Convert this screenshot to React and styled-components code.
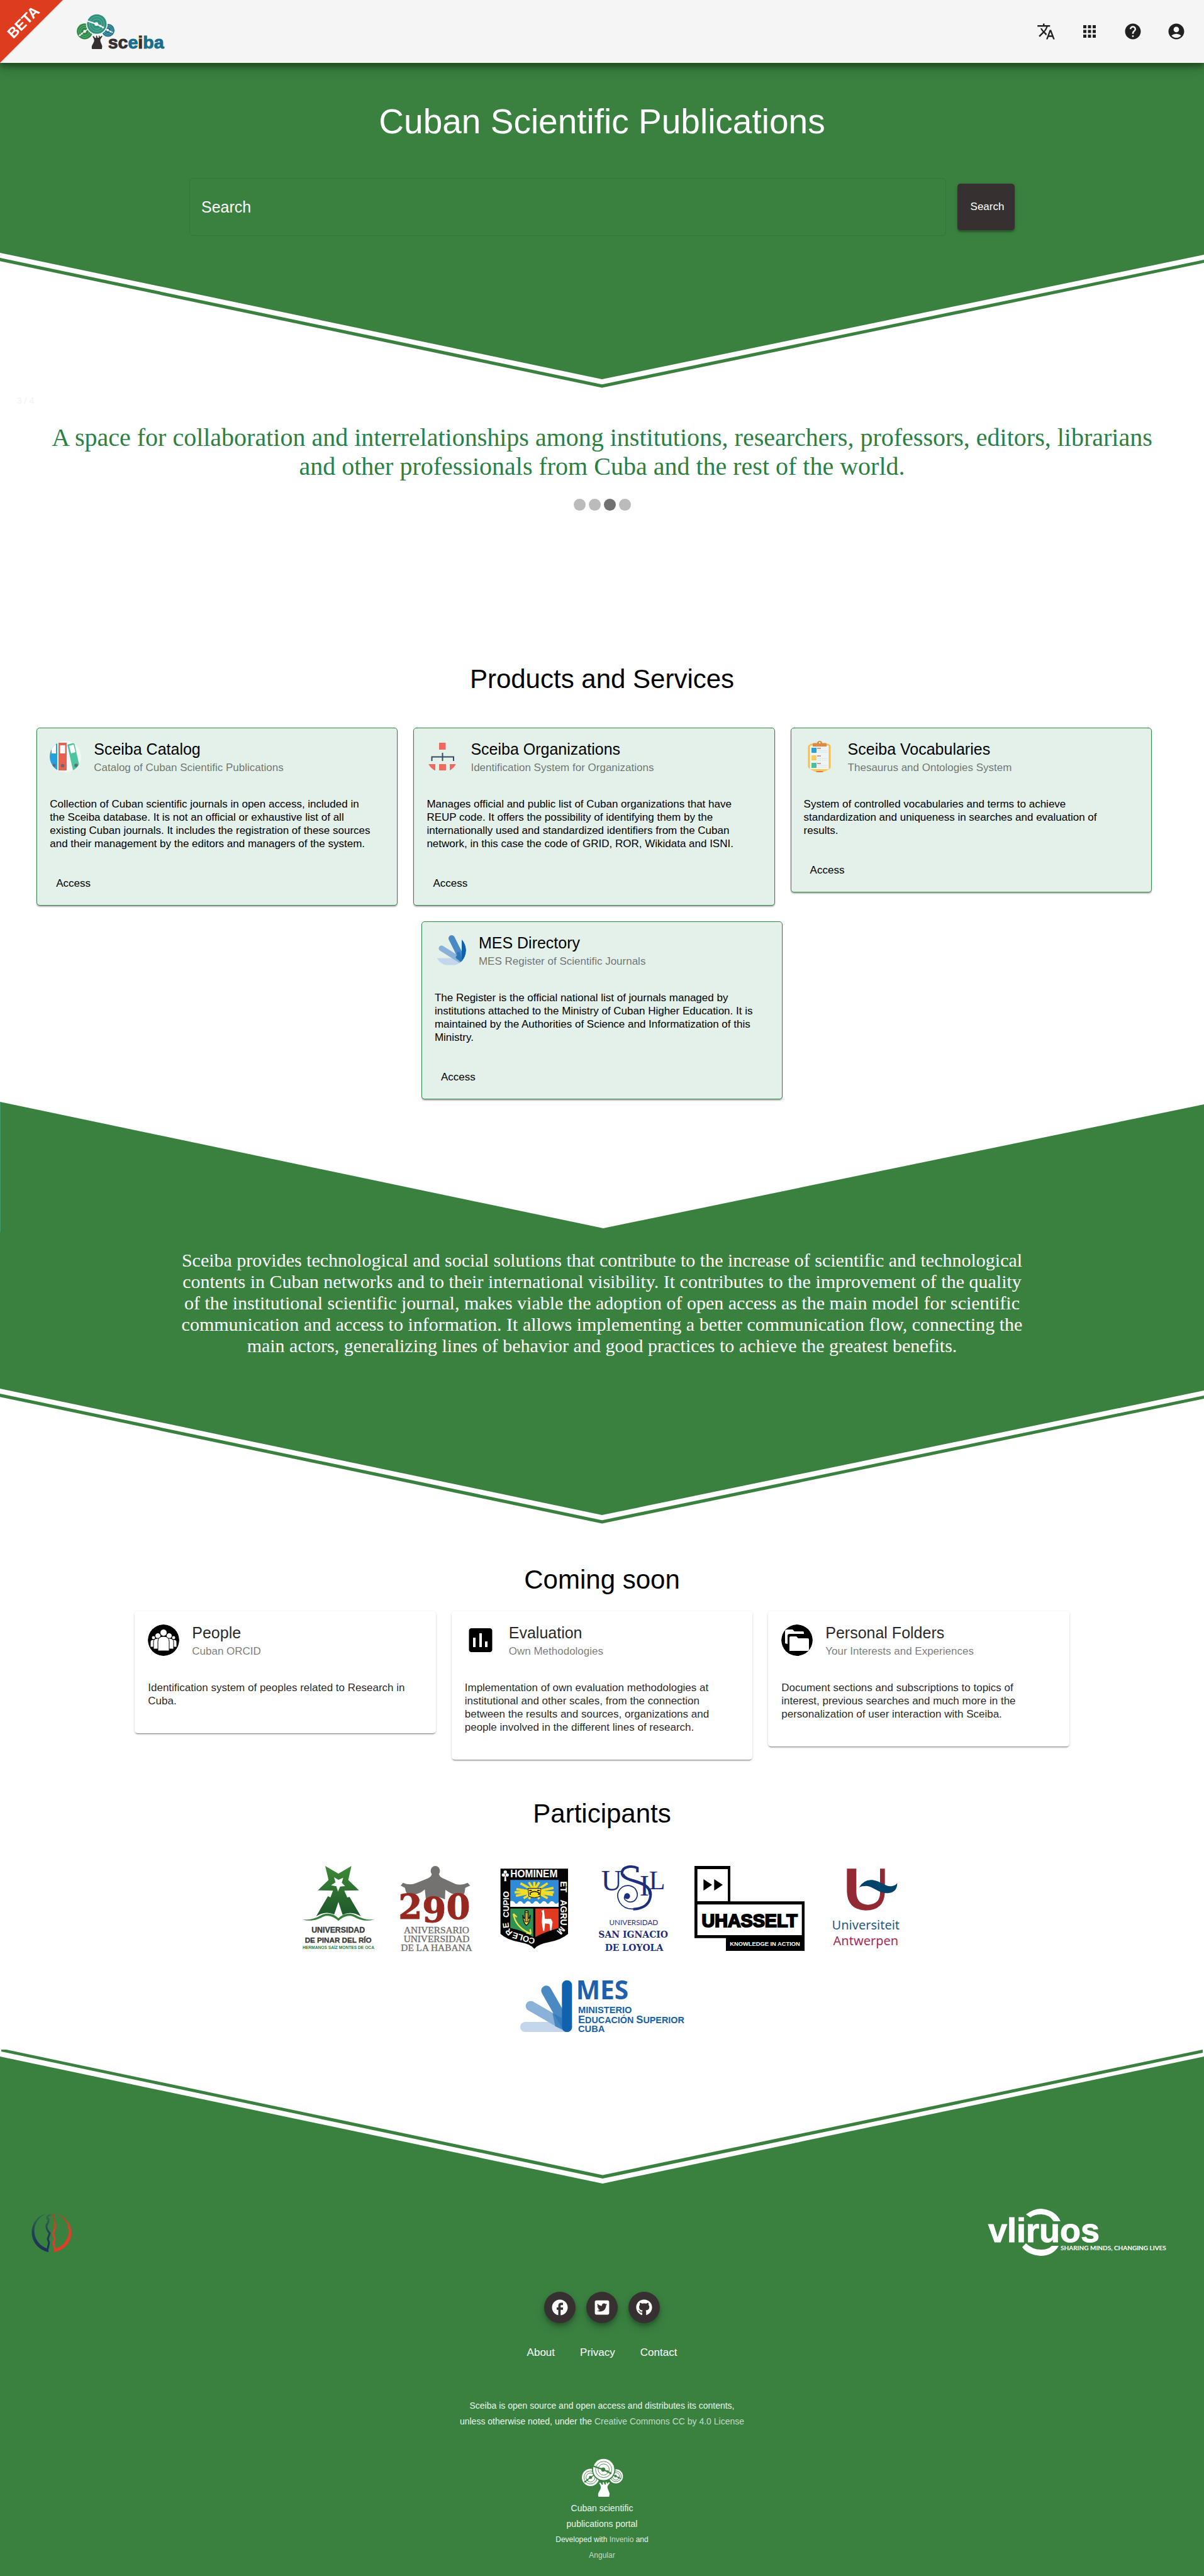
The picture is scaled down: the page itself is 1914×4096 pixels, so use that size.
import React from "react";
import styled, { createGlobalStyle, css } from "styled-components";
import { MdTranslate, MdApps, MdHelp, MdAccountCircle, MdFacebook } from "react-icons/md";
import { FaTwitterSquare, FaGithub } from "react-icons/fa";

const GREEN = "#3a8140";
const DARK = "#373031";
const SANS = `"Liberation Sans", Arial, sans-serif`;
const SERIF = `"Liberation Serif", "Times New Roman", serif`;

const GlobalStyle = createGlobalStyle`
  * { box-sizing: border-box; }
  body { margin: 0; background: #fff; color: #000; font-family: ${SANS}; }
  h1, h2, h3, p { margin: 0; font-weight: 400; }
  a { text-decoration: none; color: inherit; }
  svg { display: block; overflow: visible; }
`;

/* ---------- header ---------- */

const Header = styled.header`
  position: relative;
  z-index: 2;
  display: flex;
  align-items: center;
  justify-content: space-between;
  height: 100px;
  padding: 0 19px 0 121px;
  background: #f5f5f5;
  box-shadow: 0 6px 8px rgba(0, 0, 0, 0.32), 0 10px 20px rgba(0, 0, 0, 0.16);
`;

const Ribbon = styled.div`
  position: absolute;
  top: 0;
  left: 0;
  display: grid;
  place-items: center;
  width: 100px;
  height: 100px;
  padding: 0 26px 30px 0;
  background: #dd3c1f;
  clip-path: polygon(0 0, 100% 0, 0 100%);

  span {
    color: #fff;
    font-size: 23px;
    font-weight: 700;
    transform: rotate(-45deg);
  }
`;

const Nav = styled.nav`
  display: flex;
  gap: 19px;
`;

const IconButton = styled.button`
  display: grid;
  place-items: center;
  width: 50px;
  height: 50px;
  padding: 0;
  border: 0;
  background: none;
  color: #212121;
  font-size: 30px;
`;

/* ---------- hero ---------- */

const Hero = styled.section`
  padding: 61px 24px 26px;
  background: ${GREEN};
  color: #fff;
`;

const HeroTitle = styled.h1`
  font-size: 55px;
  line-height: 64px;
  text-align: center;
`;

const SearchForm = styled.form`
  display: flex;
  align-items: center;
  gap: 18px;
  max-width: 1312px;
  margin: 58px auto 0;
`;

const SearchInput = styled.input`
  flex: 1;
  min-width: 0;
  height: 92px;
  padding: 0 18px;
  border: 1px solid #35753a;
  border-radius: 6px;
  background: transparent;
  color: #fff;
  font: 25px ${SANS};
  outline: 0;

  &::placeholder { color: #fff; opacity: 1; }
`;

const SearchButton = styled.button`
  width: 91px;
  height: 74px;
  padding: 0 0 0 4px;
  border: 0;
  border-radius: 5px;
  background: ${DARK};
  color: #fff;
  font: 17px ${SANS};
  box-shadow: 0 3px 2px rgba(0, 0, 0, 0.2), 0 2px 6px rgba(0, 0, 0, 0.2);
`;

/* ---------- carousel ---------- */

const Carousel = styled.section`
  position: relative;
  padding: 56px 80px 244px;
  text-align: center;
`;

const SlideNumber = styled.span`
  position: absolute;
  top: 10px;
  left: 27px;
  color: #f2f2f2;
  font-size: 14px;
  line-height: 20px;
`;

const SlideText = styled.p`
  color: #2b8144;
  font-family: ${SERIF};
  font-size: 40px;
  line-height: 46px;
`;

const Dots = styled.div`
  display: flex;
  justify-content: center;
  gap: 5px;
  margin-top: 28px;
`;

const Dot = styled.button`
  width: 19px;
  height: 19px;
  padding: 0;
  border: 0;
  border-radius: 50%;
  background: ${(p) => (p.$active ? "#717171" : "#bbb")};
`;

/* ---------- cards ---------- */

const SectionTitle = styled.h2`
  font-size: 42px;
  line-height: 48px;
  text-align: center;
`;

const Products = styled.section`
  padding-bottom: 4px;
`;

const ComingSoon = styled.section`
  padding-top: 65px;
`;

const Deck = styled.div`
  display: flex;
  flex-wrap: wrap;
  align-items: flex-start;
  justify-content: center;
  margin-top: ${(p) => p.$top}px;
`;

const CardBox = styled.article`
  width: ${(p) => (p.$outlined ? "30%" : "25%")};
  margin: 0 25px ${(p) => (p.$outlined ? 25 : 0)}px 0;
  padding: 20px 20px ${(p) => (p.$outlined ? 16 : 40)}px;
  border: 1px solid ${(p) => (p.$outlined ? "#2f8747" : "transparent")};
  border-radius: 5px;
  color: rgba(0, 0, 0, ${(p) => (p.$outlined ? 1 : 0.87)});
  ${(p) =>
    p.$outlined
      ? css`
          background: #e4f1ea;
          box-shadow: 0 2px 2px rgba(0, 0, 0, 0.3);
        `
      : css`
          background: #fff;
          box-shadow: 0 3px 1px -2px rgba(0, 0, 0, 0.3), 0 2px 2px rgba(0, 0, 0, 0.14), 0 1px 4px rgba(0, 0, 0, 0.12);
        `}

  &:last-child { margin-right: 0; margin-bottom: 0; }
`;

const CardHeader = styled.div`
  display: flex;
  gap: 20px;
  height: 54px;

  svg { flex: none; overflow: hidden; border-radius: 50%; }
`;

const CardTitle = styled.h3`
  font-size: 25px;
  line-height: 26px;
`;

const CardSubtitle = styled.p`
  margin-top: 6px;
  color: rgba(0, 0, 0, 0.54);
  font-size: 17px;
  line-height: 22px;
`;

const CardText = styled.p`
  margin-top: 36px;
  padding-right: 18px;
  font-size: 17px;
  line-height: 21px;
`;

const CardLink = styled.a`
  display: inline-block;
  margin-top: 35px;
  padding: 0 10px;
  font-size: 17px;
  line-height: 36px;
  vertical-align: top;
`;

/* ---------- mission ---------- */

const Mission = styled.section`
  padding: 28px 24px 50px;
  background: ${GREEN};

  p {
    max-width: 1350px;
    margin: 0 auto;
    color: #fff;
    font-family: ${SERIF};
    font-size: 30px;
    line-height: 34px;
    text-align: center;
  }
`;

/* ---------- participants ---------- */

const Participants = styled.section`
  padding: 62px 0 27px;
`;

const LogoWall = styled.div`
  display: flex;
  flex-wrap: wrap;
  justify-content: center;
  gap: 46px 40px;
  max-width: 1150px;
  margin: 59px auto 0;
`;

/* ---------- footer ---------- */

const Footer = styled.footer`
  display: flex;
  flex-direction: column;
  align-items: center;
  padding: 39px 50px 21px;
  background: ${GREEN};
  color: #e9f5ec;
  text-align: center;
`;

const Sponsors = styled.div`
  display: flex;
  align-items: center;
  justify-content: space-between;
  width: 100%;
`;

const Social = styled.div`
  display: flex;
  gap: 17px;
  margin-top: 57px;
`;

const SocialLink = styled.a`
  display: grid;
  place-items: center;
  width: 50px;
  height: 50px;
  border-radius: 50%;
  background: ${DARK};
  color: #fff;
  font-size: ${(p) => p.$size}px;
  box-shadow: 0 4px 6px rgba(0, 0, 0, 0.25), 0 8px 16px rgba(0, 0, 0, 0.14);
`;

const FooterLinks = styled.nav`
  display: flex;
  gap: 40px;
  margin-top: 35px;
  color: #fff;
  font-size: 17px;
  line-height: 24px;
`;

const License = styled.p`
  margin: 60px 0 46px;
  font-size: 14px;
  line-height: 25px;

  a { color: #c3dcc8; }
`;

const Credits = styled.div`
  width: 160px;
  margin-top: 5px;
  font-size: 14px;
  line-height: 25px;

  p + p { font-size: 12px; }
  a { color: #c3dcc8; }
`;

/* ---------- dividers ---------- */

const Divider = styled.svg`
  width: 100%;
  height: ${(p) => p.$height}px;
`;

function PointDown() {
  return (
    <Divider $height={216} viewBox="0 0 1914 216" preserveAspectRatio="none" aria-hidden="true">
      <path d="M0 0H1914V4L957 202L0 1Z" fill={GREEN} />
      <path d="M0 9L957 210.200L1914 12V17L957 215.500L0 14.300Z" fill={GREEN} />
    </Divider>
  );
}

function NotchSolid() {
  return (
    <Divider $height={207} viewBox="0 0 1914 207" preserveAspectRatio="none" aria-hidden="true">
      <path d="M0 0L959 201L1914 4V207H0Z" fill={GREEN} />
      <path d="M0 0V207H1V0Z" fill="#3f9a6b" />
    </Divider>
  );
}

function NotchLined() {
  return (
    <Divider $height={214} viewBox="0 0 1914 214" preserveAspectRatio="none" aria-hidden="true">
      <path d="M2 0H10L958 199.500L1912 0V5L958 205L2 3Z" fill={GREEN} />
      <path d="M0 11L958 213L1914 11V214H0Z" fill={GREEN} />
    </Divider>
  );
}

/* ---------- brand drawings ---------- */

function Disc({ x, y, r, fill, ring }) {
  return (
    <g>
      <circle cx={x} cy={y} r={r} fill={fill} />
      <circle cx={x} cy={y} r={r * 0.76} fill="none" stroke={ring} strokeWidth="2.500" />
      <circle cx={x} cy={y} r={r * 0.52} fill="none" stroke={ring} strokeWidth="2.500" />
    </g>
  );
}

function Tree({ green, teal, blue, trunk, ring, needle }) {
  return (
    <g>
      <Disc x={403} y={146} r={38} fill={green} ring={ring} />
      <path d="M379 165L390 156L403 146L434 125" stroke={needle} strokeWidth="4" fill="none" />
      <circle cx="403" cy="146" r="7" fill={needle} />
      <circle cx="389" cy="157" r="4" fill={needle} />
      <circle cx="379" cy="165" r="4" fill={needle} />
      <Disc x={515} y={141} r={31} fill={blue} ring={ring} />
      <path d="M490 132L513 140L538 152" stroke={needle} strokeWidth="4" fill="none" />
      <circle cx="513" cy="140" r="6" fill={needle} />
      <circle cx="527" cy="147" r="4" fill={needle} />
      <circle cx="461" cy="111" r="52" fill={needle} />
      <Disc x={461} y={111} r={47} fill={teal} ring={ring} />
      <path d="M412 95L459 111L492 127" stroke={needle} strokeWidth="6" fill="none" />
      <circle cx="459" cy="111" r="9" fill={needle} />
      <circle cx="478" cy="120" r="5" fill={needle} />
      <circle cx="491" cy="127" r="5" fill={needle} />
      <path
        d="M441 171L446 168L453 178L458 177L457 168L461 165L465 177L471 177L470 167L473 166L476 174L485 167L488 170L479 183C474 196 487 208 487 219L485 231H438Q434 218 441 208C450 194 452 188 441 171Z"
        fill={trunk}
      />
    </g>
  );
}

function SceibaLogo() {
  return (
    <svg width="142" height="57" viewBox="363 62 426 172" role="img" aria-label="Sceiba">
      <Tree green="#2f8a41" teal="#2f9380" blue="#21708f" trunk="#362f2f" ring="#6fb8a4" needle="#f5f5f5" />
      <text x="515" y="227" fontFamily={SANS} fontWeight="700" fontSize="86" fill="#362f2f" stroke="#362f2f" strokeWidth="3">
        sc<tspan fill="#176e90" stroke="#176e90">e</tspan>i<tspan fill="#176e90" stroke="#176e90">ba</tspan>
      </text>
    </svg>
  );
}

function SceibaMark() {
  return (
    <svg width="67" height="62" viewBox="363 62 184 172" role="img" aria-label="Sceiba">
      <Tree green="#fff" teal="#fff" blue="#fff" trunk="#fff" ring={GREEN} needle={GREEN} />
    </svg>
  );
}

/* ---------- card icons ---------- */

const Avatar = (props) => <svg width="50" height="50" viewBox="0 0 50 50" aria-hidden="true" {...props} />;

const CatalogIcon = () => (
  <Avatar>
    <circle cx="25" cy="25" r="25" fill="#f3f8f5" />
    <path d="M0 4H12V47H0Z" fill="#26a0dc" />
    <path d="M3 6H10V20H3Z" fill="#fff" />
    <path d="M14 3H27V47H14Z" fill="#e9604f" />
    <path d="M16.500 7H24.500V20H16.500Z" fill="#fff" />
    <path d="M28 6L39 3L48 43L37 47Z" fill="#4fc4a0" />
    <path d="M31 8L38 6L41 18L34 20Z" fill="#fff" />
    <circle cx="7" cy="39" r="2.500" fill="#5c6b78" />
    <circle cx="20.500" cy="39.500" r="2.800" fill="#5c6b78" />
    <circle cx="42" cy="39" r="2.800" fill="#5c6b78" />
  </Avatar>
);

const OrganizationsIcon = () => (
  <Avatar>
    <path d="M20 3H30.500V14H20Z" fill="#ee6a5f" />
    <path d="M25.500 19V32M8.500 32V25.500H43V32" fill="none" stroke="#34495e" strokeWidth="2" />
    <path d="M2 37H14V47H9Q4 43 2 37ZM20 37H31V47H20ZM37 37H47Q45 43 41 47H37Z" fill="#ee6a5f" />
  </Avatar>
);

const VocabulariesIcon = () => (
  <Avatar>
    <rect x="8" y="6" width="33" height="43" rx="3" fill="#eef5f6" stroke="#f5bf4f" strokeWidth="3" />
    <path d="M9 45H41L32 50H18Z" fill="#f9c956" />
    <path d="M18 50L20 48H30L32 50Z" fill="#e2704a" />
    <path d="M14 9V4.500Q14 3.500 16 3.500H21Q21 0 25 0T29 3.500H34Q36 3.500 36 4.500V9Z" fill="#dd8b43" />
    <circle cx="25" cy="3" r="1.300" fill="#fff" />
    <path d="M12 11H20V19H12Z" fill="#2a9fd8" />
    <path d="M12 23H20V31H12Z" fill="#f9cb5b" />
    <path d="M12 35H20V43H12Z" fill="#4bbf9c" />
    <path d="M21 12H27M21 24H27M21 36H27" stroke="#c77f6a" strokeWidth="1.500" />
    <path d="M21 15.500H37M21 18H37M21 28H37M21 31H37M21 39H37M21 42H37" stroke="#dbe6e8" strokeWidth="1" />
  </Avatar>
);

const MesIcon = () => (
  <Avatar>
    <clipPath id="mes-clip"><circle cx="25" cy="25" r="25" /></clipPath>
    <g clipPath="url(#mes-clip)" strokeLinecap="round" fill="none">
      <path d="M2 43H45" stroke="#c3d6eb" strokeWidth="11" />
      <path d="M11 22L43 42" stroke="#8ab1d7" strokeWidth="9" />
      <path d="M27 6L43 38" stroke="#4a8ac3" strokeWidth="10" />
      <path d="M49 5V43" stroke="#0f63ae" strokeWidth="12" />
      <path d="M36 36L41 40L38 30" stroke="#2b75b8" strokeWidth="5" />
    </g>
  </Avatar>
);

const PeopleIcon = () => (
  <Avatar>
    <circle cx="25" cy="25" r="25" fill="#000" />
    <g fill="#fff" stroke="#000" strokeWidth="1">
      <circle cx="9" cy="21" r="3" />
      <circle cx="41" cy="21" r="3" />
      <path d="M4 36V28Q4 24 9 24T14 28V36ZM36 36V28Q36 24 41 24T46 28V36Z" />
      <circle cx="16" cy="18" r="4.500" />
      <circle cx="34" cy="18" r="4.500" />
      <path d="M9 39V28Q9 22 16 22T23 28V39ZM27 39V28Q27 22 34 22T41 28V39Z" />
      <circle cx="25" cy="13" r="5.500" />
      <path d="M16 42V27Q16 19 25 19T34 27V42Z" />
    </g>
  </Avatar>
);

const EvaluationIcon = () => (
  <Avatar>
    <rect x="6.500" y="6" width="37" height="38" rx="4" fill="#000" />
    <path d="M15 21V36M25 14V36M34 27V36" stroke="#fff" strokeWidth="4" />
  </Avatar>
);

const FoldersIcon = () => (
  <Avatar>
    <circle cx="25" cy="25" r="25" fill="#000" />
    <path d="M6 30V11Q6 8 9 8H18L21 11H34Q36 11 36 13V15H13Q10 15 10 18V31Z" fill="#fff" />
    <path d="M13 42V21Q13 19 15 19H24L27 22H42Q44 22 44 24V40Q44 42 42 42Z" fill="#fff" />
  </Avatar>
);

/* ---------- participant logos ---------- */

const PinarLogo = () => (
  <svg width="116" height="135" viewBox="66 78 348 405" role="img" aria-label="Universidad de Pinar del Río">
    <defs>
      <linearGradient id="pinar" x1="0" y1="0" x2="0" y2="1">
        <stop offset="0" stopColor="#3d8a36" />
        <stop offset="1" stopColor="#1d562b" />
      </linearGradient>
    </defs>
    <path
      d="M177 78L240 115L302 78L287 145L338 194L268 196L282 228L293 226L347 318Q300 290 260 311L240 250L220 309Q175 290 134 318L190 222L202 228L214 196L142 194L193 145Z"
      fill="url(#pinar)"
    />
    <path d="M219 132L240 144L263 134L256 158L272 174L248 176L238 200L230 175L205 170L226 156Z" fill="#fff" />
    <path d="M66 333C130 340 150 310 180 306Q215 302 240 328Q265 302 300 306C330 310 350 340 414 333C350 350 325 322 300 316Q270 312 240 340Q210 312 180 316C155 322 130 350 66 333Z" fill="#35803a" />
    <g textAnchor="middle" fontWeight="700">
      <text x="239" y="396" fontSize="37" fontFamily={SANS} fill="#3b3b3a" stroke="#3b3b3a">UNIVERSIDAD</text>
      <text x="239" y="443" fontSize="35" fontFamily={SANS} fill="#3b3b3a" stroke="#3b3b3a">DE PINAR DEL RÍO</text>
      <text x="240" y="475" fontSize="20" fontFamily={SANS} fill="#2f7d3b">HERMANOS SAÍZ MONTES DE OCA</text>
    </g>
  </svg>
);

const HabanaLogo = () => (
  <svg width="116" height="135" viewBox="534 78 348 405" role="img" aria-label="Universidad de La Habana">
    <g fill="#737270">
      <ellipse cx="702" cy="102" rx="22" ry="24" />
      <path d="M685 118H720Q722 132 750 142L800 165Q830 172 856 158L868 172L845 182Q843 205 838 213Q800 222 770 205L750 192L748 238Q702 215 657 236L652 190Q620 222 568 213Q560 200 557 182L537 172L548 158Q580 172 610 160L655 142Q683 132 685 118Z" />
    </g>
    <text x="526" y="330" fontFamily={`"DejaVu Serif", serif`} fontWeight="700" fontSize="164" fill="#96281f" stroke="#96281f" strokeWidth="3">
      2<tspan dy="14">9</tspan><tspan dy="-14">0</tspan>
    </text>
    <g textAnchor="middle" fontFamily={SERIF} fontSize="46" fill="#6d6c6b" stroke="#6d6c6b">
      <text x="708" y="399">ANIVERSARIO</text>
      <text x="708" y="441">UNIVERSIDAD</text>
      <text x="708" y="482">DE LA HABANA</text>
    </g>
  </svg>
);

const ShieldLogo = () => (
  <svg width="116" height="135" viewBox="1003 78 350 405" role="img" aria-label="Colere cupio hominem et agrum">
    <path d="M1014 90H1338V403Q1305 432 1245 443Q1195 452 1176 474Q1160 452 1108 443Q1045 432 1014 403Z" fill="#050505" />
    <path d="M1061 144H1293V273H1061Z" fill="#2f8bd8" />
    <path d="M1061 246Q1075 240 1085 256Q1092 262 1099 250Q1112 240 1123 256Q1130 262 1137 250Q1150 240 1161 256Q1168 262 1175 250Q1188 240 1199 256Q1206 262 1213 250Q1226 240 1237 256Q1244 262 1251 250Q1264 240 1275 256Q1284 262 1293 250V273H1061Z" fill="#fff" />
    <g stroke="#f2dc24" strokeWidth="11">
      <path d="M1090 188L1265 216M1088 220L1268 182M1110 160L1240 232M1125 232L1240 160M1150 155L1200 235M1200 155L1150 235M1176 153V200M1082 203H1270" />
    </g>
    <path d="M1146 184H1208L1204 222Q1176 236 1150 222Z" fill="#f2dc24" stroke="#111" strokeWidth="3" />
    <path d="M1152 194H1164M1190 194H1202M1154 208Q1176 190 1202 208M1154 212H1160M1194 212H1202" stroke="#111" strokeWidth="5" fill="none" />
    <path d="M1061 281H1171V418Q1120 385 1061 375Z" fill="#2f9152" />
    <path d="M1181 281H1293V375Q1235 390 1181 418Z" fill="#e23a22" />
    <path d="M1076 306Q1085 372 1160 402M1076 306L1092 322M1160 402L1138 398M1160 402L1156 380" fill="none" stroke="#efe14b" strokeWidth="7" />
    <path d="M1121 312Q1122 350 1138 362Q1156 350 1157 312Q1150 340 1146 320V292H1132V320Q1128 340 1121 312Z" fill="#efe14b" stroke="#111" strokeWidth="4" />
    <path d="M1132 300H1146V345H1132Z" fill="#caa92c" stroke="#111" strokeWidth="3" />
    <path d="M1210 292L1222 287L1227 330H1256L1264 345L1258 386H1252L1250 356L1228 352L1224 388H1218L1212 345L1215 303Z" fill="#fff" />
    <g fill="#fff">
      <circle cx="1037" cy="106" r="8" /><circle cx="1028" cy="120" r="8" /><circle cx="1046" cy="120" r="8" />
      <path d="M1034 124H1040L1042 150H1032Z" />
    </g>
    <path id="shield-right" d="M1303 150V350Q1302 378 1275 390L1190 424" fill="none" />
    <path id="shield-left" d="M1182 426L1082 396Q1053 386 1053 350V150" fill="none" />
    <g fill="#fff" fontFamily={SANS} fontWeight="700">
      <text x="1061" y="132" fontSize="47">HOMINEM</text>
      <text fontSize="42"><textPath href="#shield-right">ET{"\u00a0\u00a0\u00a0"}AGRUM</textPath></text>
      <text fontSize="40"><textPath href="#shield-left">COLERE{"\u00a0\u00a0"}CUPIO</textPath></text>
    </g>
  </svg>
);

const UsilLogo = () => (
  <svg width="116" height="135" viewBox="-30 78 348 405" role="img" aria-label="Universidad San Ignacio de Loyola">
    <g fill="#1d2f7c">
      <text x="-7" y="196" fontFamily={SERIF} fontSize="138">U</text>
      <text x="176" y="219" fontFamily={SERIF} fontSize="138">I</text>
      <text x="221" y="188" fontFamily={SERIF} fontSize="126">L</text>
      <circle cx="117" cy="222" r="14" />
      <g fill="none" stroke="#1d2f7c">
        <path d="M166 108V88Q150 79 130 81Q92 86 92 112C95 160 225 135 226 215" strokeWidth="12" />
        <path d="M97 116C105 158 232 148 229 215Q225 280 146 284" strokeWidth="12" />
        <path d="M180 278Q110 296 82 253Q56 206 95 178Q128 162 155 186Q178 218 152 244Q128 258 108 240Q100 232 106 222" strokeWidth="5" />
      </g>
      <g textAnchor="middle">
        <text x="148" y="361" fontFamily="Lato, sans-serif" fontSize="35">UNIVERSIDAD</text>
        <text x="146" y="420" fontFamily={`"DejaVu Serif", serif`} fontWeight="700" fontSize="42">SAN IGNACIO</text>
        <text x="150" y="482" fontFamily={`"DejaVu Serif", serif`} fontWeight="700" fontSize="42">DE LOYOLA</text>
      </g>
    </g>
  </svg>
);

const HasseltLogo = () => (
  <svg width="175" height="135" viewBox="441 78 525 405" role="img" aria-label="UHasselt, Knowledge in action">
    <path d="M441 78H612V247H966V483H591V422H441Z" fill="#000" />
    <path d="M455 93H600V246H455ZM455 262H953V408H455Z" fill="#fff" />
    <path d="M484 141L525 168L484 196ZM535 141L576 168L535 196Z" fill="#000" />
    <text x="704" y="370" textAnchor="middle" fontFamily={SANS} fontWeight="700" fontSize="86" stroke="#000" strokeWidth="6">UHASSELT</text>
    <text x="777" y="458" textAnchor="middle" fontFamily={SANS} fontWeight="700" fontSize="28" fill="#fff">KNOWLEDGE IN ACTION</text>
  </svg>
);

const AntwerpenLogo = () => (
  <svg width="116" height="135" viewBox="1086 78 348 405" role="img" aria-label="Universiteit Antwerpen">
    <path d="M1168 91H1213V205Q1215 262 1270 263Q1326 260 1326 205V91H1349V205Q1345 290 1258 290Q1170 286 1168 200Z" fill="#932a33" />
    <path d="M1226 180Q1250 141 1290 145C1330 150 1350 177 1380 175Q1400 172 1408 160Q1408 205 1362 208C1320 208 1290 175 1262 173Q1240 173 1226 180Z" fill="#00446b" />
    <g textAnchor="middle" fontFamily={`"Noto Sans", "Open Sans", sans-serif`} fontSize="60">
      <text x="1258" y="381" fill="#235c80">Universiteit</text>
      <text x="1258" y="456" fill="#a52c4e">Antwerpen</text>
    </g>
  </svg>
);

const MesLogo = () => (
  <svg width="261" height="84" viewBox="1108 623 783 252" role="img" aria-label="MES, Ministerio de Educación Superior, Cuba">
    <g strokeLinecap="round" strokeWidth="48" fill="none">
      <path d="M1132 848H1331" stroke="#c3d6eb" />
      <path d="M1158 748L1331 848" stroke="#8ab1d7" />
      <path d="M1232 675L1331 848" stroke="#4a8ac3" />
      <path d="M1331 649V848" stroke="#0f63ae" />
    </g>
    <path d="M1262 781L1307 806V848L1310 860L1275 845Z" fill="#2b75b8" opacity="0.700" />
    <g fontWeight="700" fill="#1460ad" fontFamily={SANS}>
      <text x="1374" y="715" fontFamily={`"Noto Sans", "Open Sans", sans-serif`} fontSize="122" fill="#215fad">MES</text>
      <text x="1384" y="781" fontSize="44">MINISTERIO</text>
      <text x="1384" y="830" fontSize="50">E<tspan fontSize="43">DUCACIÓN </tspan>S<tspan fontSize="43">UPERIOR</tspan></text>
      <text x="1384" y="873" fontSize="44">CUBA</text>
    </g>
  </svg>
);

/* ---------- sponsor logos ---------- */

const MinistryLogo = () => (
  <svg width="64" height="62" viewBox="0 0 64 62" role="img" aria-label="Ministry">
    <defs>
      <linearGradient id="min-blue" x1="0" y1="0" x2="0" y2="1">
        <stop offset="0" stopColor="#2d6f48" /><stop offset="0.500" stopColor="#1f3f5c" /><stop offset="1" stopColor="#1c3157" />
      </linearGradient>
      <linearGradient id="min-red" x1="0" y1="0" x2="0" y2="1">
        <stop offset="0" stopColor="#7d5a34" /><stop offset="0.400" stopColor="#d8402a" /><stop offset="1" stopColor="#e63b25" />
      </linearGradient>
    </defs>
    <path d="M25 0C-8 8 -8 54 27 62V57L24 56C-1 46 -3 12 25 0Z" fill="url(#min-blue)" />
    <path d="M25 10Q25 2 31 3M27 8Q28 14 24 19Q23 25 29 32L26 41L28 47L25 60" fill="none" strokeWidth="3" stroke="url(#min-blue)" />
    <path d="M37 0C72 8 73 54 36 62V57L40 56C65 46 67 12 37 0Z" fill="url(#min-red)" />
    <path d="M32 3Q36 2 36 9Q36 14 38 20Q38 25 34 32L37 41L35 47L38 60" fill="none" strokeWidth="3" stroke="url(#min-red)" />
  </svg>
);

const VlirLogo = () => (
  <svg width="293" height="75" viewBox="0 0 293 75" role="img" aria-label="VLIR-UOS, Sharing minds, changing lives">
    <path d="M60 9Q72 0 84 0Q107 2 115 20H104Q97 9 84 9Q73 9 67 14Z" fill="#fff" />
    <path d="M60 55Q70 65 84 65Q96 65 101 59H112Q103 75 83 75Q62 73 54 61Z" fill="#fff" />
    <text x="0" y="53" fontFamily={SANS} fontWeight="700" fontSize="54" fill="#fff" stroke="#fff" strokeWidth="1">vliruos</text>
    <text x="115" y="66" fontFamily="Lato, sans-serif" fontWeight="700" fontSize="10" fill="#fff">SHARING MINDS, CHANGING LIVES</text>
  </svg>
);

/* ---------- content ---------- */

const products = [
  {
    icon: <CatalogIcon />,
    title: "Sceiba Catalog",
    subtitle: "Catalog of Cuban Scientific Publications",
    text: "Collection of Cuban scientific journals in open access, included in the Sceiba database. It is not an official or exhaustive list of all existing Cuban journals. It includes the registration of these sources and their management by the editors and managers of the system.",
  },
  {
    icon: <OrganizationsIcon />,
    title: "Sceiba Organizations",
    subtitle: "Identification System for Organizations",
    text: "Manages official and public list of Cuban organizations that have REUP code. It offers the possibility of identifying them by the internationally used and standardized identifiers from the Cuban network, in this case the code of GRID, ROR, Wikidata and ISNI.",
  },
  {
    icon: <VocabulariesIcon />,
    title: "Sceiba Vocabularies",
    subtitle: "Thesaurus and Ontologies System",
    text: "System of controlled vocabularies and terms to achieve standardization and uniqueness in searches and evaluation of results.",
  },
  {
    icon: <MesIcon />,
    title: "MES Directory",
    subtitle: "MES Register of Scientific Journals",
    text: "The Register is the official national list of journals managed by institutions attached to the Ministry of Cuban Higher Education. It is maintained by the Authorities of Science and Informatization of this Ministry.",
  },
];

const upcoming = [
  {
    icon: <PeopleIcon />,
    title: "People",
    subtitle: "Cuban ORCID",
    text: "Identification system of peoples related to Research in Cuba.",
  },
  {
    icon: <EvaluationIcon />,
    title: "Evaluation",
    subtitle: "Own Methodologies",
    text: "Implementation of own evaluation methodologies at institutional and other scales, from the connection between the results and sources, organizations and people involved in the different lines of research.",
  },
  {
    icon: <FoldersIcon />,
    title: "Personal Folders",
    subtitle: "Your Interests and Experiences",
    text: "Document sections and subscriptions to topics of interest, previous searches and much more in the personalization of user interaction with Sceiba.",
  },
];

function Card({ item, outlined }) {
  return (
    <CardBox $outlined={outlined}>
      <CardHeader>
        {item.icon}
        <div>
          <CardTitle>{item.title}</CardTitle>
          <CardSubtitle>{item.subtitle}</CardSubtitle>
        </div>
      </CardHeader>
      <CardText>{item.text}</CardText>
      {outlined && <CardLink href="#">Access</CardLink>}
    </CardBox>
  );
}

export default function App() {
  return (
    <>
      <GlobalStyle />
      <Header>
        <Ribbon><span>BETA</span></Ribbon>
        <a href="#"><SceibaLogo /></a>
        <Nav aria-label="Tools">
          <IconButton aria-label="Language"><MdTranslate /></IconButton>
          <IconButton aria-label="Applications"><MdApps /></IconButton>
          <IconButton aria-label="Help"><MdHelp /></IconButton>
          <IconButton aria-label="Account"><MdAccountCircle /></IconButton>
        </Nav>
      </Header>

      <main>
        <Hero>
          <HeroTitle>Cuban Scientific Publications</HeroTitle>
          <SearchForm onSubmit={(e) => e.preventDefault()}>
            <SearchInput type="text" placeholder="Search" aria-label="Search" />
            <SearchButton type="submit">Search</SearchButton>
          </SearchForm>
        </Hero>
        <PointDown />

        <Carousel>
          <SlideNumber>3 / 4</SlideNumber>
          <SlideText>
            A space for collaboration and interrelationships among institutions, researchers, professors, editors, librarians and other
            professionals from Cuba and the rest of the world.
          </SlideText>
          <Dots>
            {[1, 2, 3, 4].map((n) => (
              <Dot key={n} type="button" $active={n === 3} aria-label={`Slide ${n}`} />
            ))}
          </Dots>
        </Carousel>

        <Products>
          <SectionTitle>Products and Services</SectionTitle>
          <Deck $top={53}>
            {products.map((item) => <Card key={item.title} item={item} outlined />)}
          </Deck>
        </Products>

        <NotchSolid />
        <Mission>
          <p>
            Sceiba provides technological and social solutions that contribute to the increase of scientific and technological contents in
            Cuban networks and to their international visibility. It contributes to the improvement of the quality of the institutional
            scientific journal, makes viable the adoption of open access as the main model for scientific communication and access to
            information. It allows implementing a better communication flow, connecting the main actors, generalizing lines of behavior and
            good practices to achieve the greatest benefits.
          </p>
        </Mission>
        <PointDown />

        <ComingSoon>
          <SectionTitle>Coming soon</SectionTitle>
          <Deck $top={26}>
            {upcoming.map((item) => <Card key={item.title} item={item} />)}
          </Deck>
        </ComingSoon>

        <Participants>
          <SectionTitle>Participants</SectionTitle>
          <LogoWall>
            <PinarLogo />
            <HabanaLogo />
            <ShieldLogo />
            <UsilLogo />
            <HasseltLogo />
            <AntwerpenLogo />
            <MesLogo />
          </LogoWall>
        </Participants>
      </main>

      <NotchLined />
      <Footer>
        <Sponsors>
          <MinistryLogo />
          <VlirLogo />
        </Sponsors>
        <Social>
          <SocialLink href="#" $size={30} aria-label="Facebook"><MdFacebook /></SocialLink>
          <SocialLink href="#" $size={26} aria-label="Twitter"><FaTwitterSquare /></SocialLink>
          <SocialLink href="#" $size={26} aria-label="GitHub"><FaGithub /></SocialLink>
        </Social>
        <FooterLinks aria-label="Footer">
          <a href="#">About</a>
          <a href="#">Privacy</a>
          <a href="#">Contact</a>
        </FooterLinks>
        <License>
          Sceiba is open source and open access and distributes its contents,
          <br />
          unless otherwise noted, under the <a href="#">Creative Commons CC by 4.0 License</a>
        </License>
        <SceibaMark />
        <Credits>
          <p>Cuban scientific publications portal</p>
          <p>Developed with <a href="#">Invenio</a> and <a href="#">Angular</a></p>
        </Credits>
      </Footer>
    </>
  );
}
